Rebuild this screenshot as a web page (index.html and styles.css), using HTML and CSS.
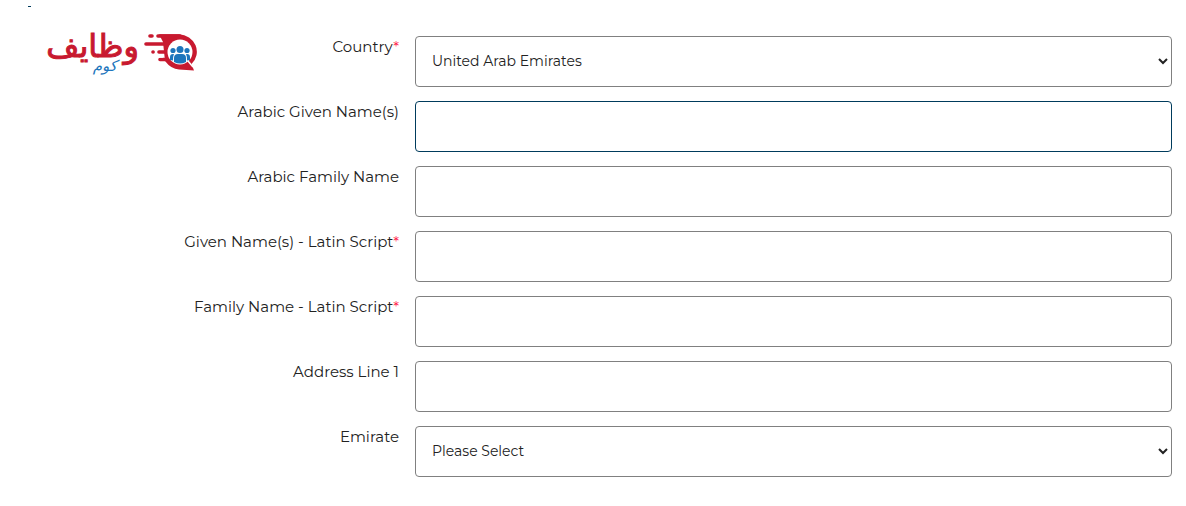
FILE: index.html
```html
<!DOCTYPE html>
<html lang="en">
<head>
<meta charset="utf-8">
<meta name="viewport" content="width=device-width, initial-scale=1">
<title>Address details</title>
<link rel="stylesheet" href="styles.css">
</head>
<body>
<main class="page">
  <span class="tick"></span>
  <div class="brand" lang="ar" dir="rtl">
    <svg class="brand-mark" viewBox="0 0 56 40" aria-hidden="true">
      <g fill="none" stroke="#c8192f" stroke-linecap="round">
        <path d="M15 4H37M3 12H24M16 20H23M17 27.500H24" stroke-width="3.600"/>
        <path d="M7 4H9M10 20h.1" stroke-width="3.600"/>
      </g>
      <path d="M16 2.200H36A18.500 17.500 0 0 1 48.500 32L51 38.500 36 37.500Q28 37 22 29L20 10Z" fill="#c8192f"/>
      <path d="M12 14H20Q18 16 18 18H12zM12 22H19L20 25.700H12z" fill="#fff"/>
      <circle cx="37" cy="20" r="12.500" fill="#fff"/>
      <path d="M45 29l5 6" stroke="#fff" stroke-width="1.500"/>
      <g fill="#1c75bc">
        <circle cx="37" cy="17.500" r="3.500"/>
        <circle cx="30" cy="18.500" r="2.600"/>
        <circle cx="44" cy="18.500" r="2.600"/>
        <path d="M31 30v-4q0-4 4-4h4q4 0 4 4v4q-6 3-12 0zM27 28v-3q0-3 3-3h1q-1 2-1 6.500zM47 28v-3q0-3-3-3h-1q1 2 1 6.500z"/>
      </g>
    </svg>
    <div class="brand-text">
      <span class="brand-name">وظايف</span>
      <span class="brand-sub">كوم</span>
    </div>
  </div>
  <form class="form">
    <div class="row">
      <label class="label" for="country">Country<span class="required">*</span></label>
      <select class="field" id="country"><option>United Arab Emirates</option></select>
    </div>
    <div class="row">
      <label class="label" for="arabic-given">Arabic Given Name(s)</label>
      <input class="field field-active" id="arabic-given" type="text">
    </div>
    <div class="row">
      <label class="label" for="arabic-family">Arabic Family Name</label>
      <input class="field" id="arabic-family" type="text">
    </div>
    <div class="row">
      <label class="label" for="latin-given">Given Name(s) - Latin Script<span class="required">*</span></label>
      <input class="field" id="latin-given" type="text">
    </div>
    <div class="row">
      <label class="label" for="latin-family">Family Name - Latin Script<span class="required">*</span></label>
      <input class="field" id="latin-family" type="text">
    </div>
    <div class="row">
      <label class="label" for="address">Address Line 1</label>
      <input class="field" id="address" type="text">
    </div>
    <div class="row">
      <label class="label" for="emirate">Emirate</label>
      <select class="field" id="emirate"><option>Please Select</option></select>
    </div>
  </form>
</main>
</body>
</html>
```

FILE: styles.css
```css
* {
  box-sizing: border-box;
}

body {
  margin: 0;
  background: #fff;
  color: #222;
  font-family: Montserrat, Inter, sans-serif;
  font-size: 15px;
  font-weight: 400;
}

.page {
  position: relative;
  padding: 36px 14px 28px 0;
}

.tick {
  position: absolute;
  top: 6px;
  left: 28px;
  width: 3px;
  height: 1px;
  background: #003b5c;
}

.brand {
  position: absolute;
  top: 32px;
  left: 48px;
  display: flex;
  align-items: flex-start;
  gap: 4px;
}

.brand-mark {
  width: 56px;
  height: 40px;
}

.brand-text {
  display: flex;
  flex-direction: column;
  width: 91px;
  font-family: "DejaVu Sans", sans-serif;
}

.brand-name {
  color: #c8192f;
  font-size: 32px;
  line-height: 28px;
  -webkit-text-stroke: 1px #c8192f;
}

.brand-sub {
  padding-right: 22px;
  color: #1c75bc;
  font-size: 15px;
  font-style: italic;
  line-height: 12px;
}

.form {
  display: flex;
  flex-direction: column;
  gap: 14px;
}

.row {
  display: grid;
  grid-template-columns: 399px 1fr;
  column-gap: 16px;
}

.label {
  line-height: 22px;
  text-align: right;
}

.required {
  color: #ff1f4b;
}

.field {
  width: 100%;
  height: 51px;
  padding: 0 16px;
  border: 1px solid #808080;
  border-radius: 4px;
  background: #fff;
  color: #222;
  font: inherit;
  font-size: 14px;
}

select.field {
  padding: 0 0 2px 12px;
}

.field-active {
  border-color: #003b5c;
}
```
